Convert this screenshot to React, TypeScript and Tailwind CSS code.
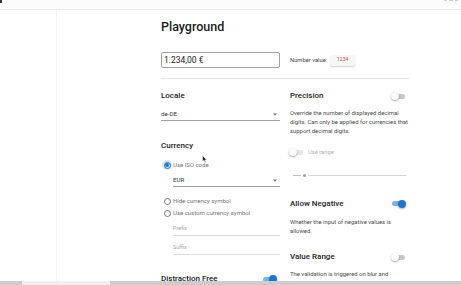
import React from 'react';

const Toggle = ({ on = false, disabled = false }: { on?: boolean; disabled?: boolean }) => (
  <div className="relative w-[15px] h-[8px] flex items-center">
    <div
      className={
        on
          ? 'w-[13px] h-[5px] ml-[1px] rounded-full bg-[#7fb0ea]'
          : disabled
            ? 'w-[13px] h-[5px] ml-[1px] rounded-full bg-[#e6e6e6]'
            : 'w-[13px] h-[5px] ml-[1px] rounded-full bg-[#c8c8c8]'
      }
    />
    <div
      className={
        on
          ? 'absolute right-0 top-0 w-[8px] h-[8px] rounded-full bg-[#1976d2] shadow-[0_1px_2px_rgba(0,0,0,0.3)]'
          : 'absolute left-0 top-0 w-[8px] h-[8px] rounded-full bg-[#fafafa] shadow-[0_1px_2px_rgba(0,0,0,0.35)]'
      }
    />
  </div>
);

const Radio = ({ checked = false, label }: { checked?: boolean; label: string }) => (
  <div className="flex items-center h-[10px]">
    <div className="w-[12px] flex justify-center">
      {checked ? (
        <div className="w-[10px] h-[10px] rounded-full bg-[#d6e6f7] flex items-center justify-center">
          <div className="w-[7px] h-[7px] rounded-full border border-[#1976d2] flex items-center justify-center">
            <div className="w-[3.5px] h-[3.5px] rounded-full bg-[#1976d2]" />
          </div>
        </div>
      ) : (
        <div className="w-[7px] h-[7px] rounded-full border border-[#757575]" />
      )}
    </div>
    <span className="text-[6px] text-[#747474] leading-[10px]">{label}</span>
  </div>
);

const Caret = () => (
  <svg width="4" height="3" viewBox="0 0 4 3" className="mr-[3px]">
    <path d="M0 0.5 L4 0.5 L2 2.8 Z" fill="#777" />
  </svg>
);

const Select = ({ value, className }: { value: string; className: string }) => (
  <div className={`${className} h-[13px] flex items-center justify-between border-b border-[#9e9e9e]`}>
    <span className="text-[6.2px] text-[#333] leading-[12px]">{value}</span>
    <Caret />
  </div>
);

const Field = ({ placeholder, className }: { placeholder: string; className: string }) => (
  <div className={`${className} ml-[12px] h-[14px] flex items-center border-b border-[#dcdcdc]`}>
    <span className="text-[5.5px] text-[#a8a8a8] leading-[13px]">{placeholder}</span>
  </div>
);

const Heading = ({ children, className = '' }: { children: React.ReactNode; className?: string }) => (
  <div className={`${className} h-[12px] flex items-center justify-between`}>
    <span className="text-[8px] font-medium text-[#212121] leading-[12px]">{children}</span>
  </div>
);

export default function App() {
  return (
    <div className="relative w-[461px] h-[285px] overflow-hidden bg-white font-[Roboto,sans-serif]">
      {/* top bar */}
      <div className="h-[10px] bg-[#fcfcfc] border-b border-[#ececec] flex justify-between">
        <div className="w-[2px] h-[3px] bg-[#333]" />
        <div className="flex gap-[2px] mr-[3px] h-[2px]">
          <div className="w-[3px] h-[1px] bg-[#d0d0d0]" />
          <div className="w-[4px] h-[1px] bg-[#d0d0d0]" />
          <div className="w-[3px] h-[1px] bg-[#d0d0d0]" />
        </div>
      </div>

      <div className="flex h-[275px]">
        {/* sidebar */}
        <div className="w-[57px] border-r border-[#f2f2f2] shrink-0" />

        {/* main */}
        <div className="pl-[104px] w-[353px]">
          <div className="mt-[9px] h-[16px] text-[12.5px] font-medium leading-[16px] text-[#1a1a1a]">Playground</div>

          <div className="mt-[17px] flex items-center">
            <div className="w-[119px] h-[16px] border border-[#a0a0a0] rounded-[2px] flex items-center px-[2px]">
              <span className="text-[8.5px] text-[#222] leading-[14px]">1.234,00 €</span>
            </div>
            <span className="ml-[10px] text-[5.8px] text-[#444]">Number value:</span>
            <div className="ml-[3px] w-[25px] h-[11px] rounded-[2px] bg-[#f7f7f7] shadow-[0_1px_1.5px_rgba(0,0,0,0.18)] flex items-center justify-center">
              <span className="text-[5px] text-[#d04848]">1234</span>
            </div>
          </div>

          <div className="mt-[10px] w-[248px] border-t border-[#e6e6e6]" />

          <div className="grid grid-cols-[119px_119px] gap-x-[10px]">
            {/* left column */}
            <div className="flex flex-col">
              <Heading className="mt-[11px]">Locale</Heading>
              <Select value="de-DE" className="mt-[6px]" />
              <Heading className="mt-[19px]">Currency</Heading>
              <div className="mt-[8px]">
                <Radio checked label="Use ISO code" />
              </div>
              <Select value="EUR" className="mt-[4px] ml-[12px]" />
              <div className="mt-[9px]">
                <Radio label="Hide currency symbol" />
              </div>
              <div className="mt-[2px]">
                <Radio label="Use custom currency symbol" />
              </div>
              <Field placeholder="Prefix" className="mt-[4px]" />
              <Field placeholder="Suffix" className="mt-[5px]" />
              <div className="mt-[18px] h-[12px] flex items-center justify-between pr-[3px]">
                <span className="text-[8px] font-medium text-[#212121] leading-[12px]">Distraction Free</span>
                <Toggle on />
              </div>
            </div>

            {/* right column */}
            <div className="flex flex-col">
              <div className="mt-[11px] h-[12px] flex items-center justify-between pr-[3px]">
                <span className="text-[8px] font-medium text-[#212121] leading-[12px]">Precision</span>
                <Toggle />
              </div>
              <p className="mt-[6.5px] text-[5.9px] leading-[9.4px] text-[#4a4a4a]">
                Override the number of displayed decimal digits. Can only be applied for currencies that support decimal digits.
              </p>
              <div className="mt-[10.5px] h-[10px] flex items-center -ml-[1px]">
                <Toggle disabled />
                <span className="ml-[4px] text-[5.8px] text-[#b0b0b0]">Use range</span>
              </div>
              <div className="mt-[16.5px] h-[4px] flex items-center pr-[3px]">
                <div className="ml-[3px] w-[8px] h-[1px] bg-[#bdbdbd]" />
                <div className="ml-[2px] w-[3px] h-[3px] rounded-full bg-[#9e9e9e]" />
                <div className="ml-[2px] flex-1 h-[1px] bg-[#d4d4d4]" />
              </div>
              <div className="mt-[20px] h-[12px] flex items-center justify-between pr-[3px]">
                <span className="text-[8px] font-medium text-[#212121] leading-[12px]">Allow Negative</span>
                <Toggle on />
              </div>
              <p className="mt-[8.5px] text-[5.9px] leading-[9px] text-[#4a4a4a]">
                Whether the input of negative values is allowed.
              </p>
              <div className="mt-[15px] h-[12px] flex items-center justify-between pr-[3px]">
                <span className="text-[8px] font-medium text-[#212121] leading-[12px]">Value Range</span>
                <Toggle />
              </div>
              <p className="mt-[6.5px] text-[5.9px] leading-[9.4px] text-[#4a4a4a]">
                The validation is triggered on blur and automatically sets the respective threshold.
              </p>
            </div>
          </div>
        </div>
      </div>

      {/* mouse cursor */}
      <svg className="absolute left-[202px] top-[155px]" width="5" height="8" viewBox="0 0 5 8">
        <path d="M0.5 0.5 L0.5 6.5 L2 5.2 L3 7.5 L3.9 7.1 L2.9 4.9 L4.6 4.8 Z" fill="#222" stroke="#fff" strokeWidth="0.5" />
      </svg>

      {/* bottom scrollbar */}
      <div className="absolute left-0 bottom-0 w-[461px] h-[4px] bg-[#cdcdcd]">
        <div className="ml-[22px] w-[88px] h-[4px] bg-[#efefef]" />
      </div>
    </div>
  );
}
